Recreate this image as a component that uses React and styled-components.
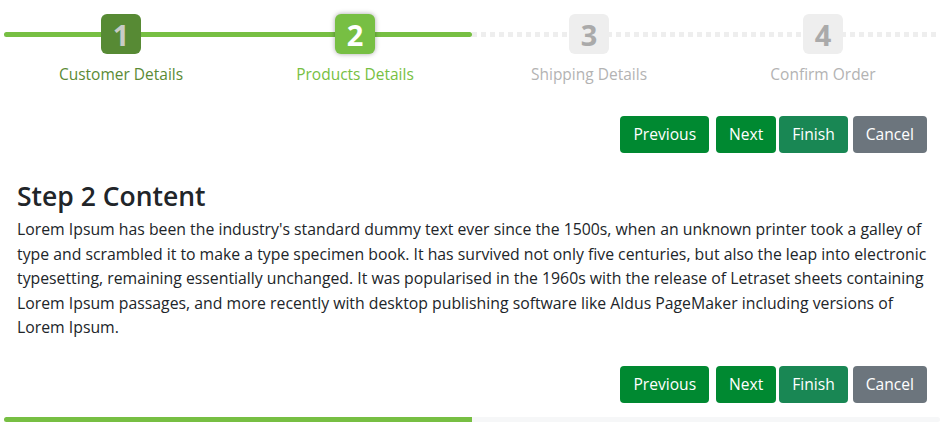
import React from "react";
import styled, { createGlobalStyle, css } from "styled-components";

const GlobalStyle = createGlobalStyle`
  html, body { margin: 0; padding: 0; background: #fff; }
  body {
    font-family: "Open Sans", "Noto Sans", sans-serif;
    color: #212529;
    -webkit-font-smoothing: antialiased;
  }
`;

const GREEN = "#77bf43";
const DARK_GREEN = "#578a34";

const Wizard = styled.div`
  margin-left: 4px;
  width: 936px;
`;

const Nav = styled.ol`
  position: relative;
  list-style: none;
  margin: 0;
  padding: 14px 0 0;
  display: grid;
  grid-template-columns: repeat(4, 1fr);

  &::before {
    content: "";
    position: absolute;
    left: 0;
    right: 0;
    top: 32px;
    height: 5px;
    border-radius: 3px;
    background: repeating-linear-gradient(
      to right,
      #eeeeee 0,
      #eeeeee 5px,
      transparent 5px,
      transparent 9px
    );
  }

  &::after {
    content: "";
    position: absolute;
    left: 0;
    top: 32px;
    height: 5px;
    width: ${(p) => p.$progress}%;
    border-radius: 3px;
    background: ${GREEN};
  }
`;

const Step = styled.li`
  position: relative;
  z-index: 1;
  display: flex;
  flex-direction: column;
  align-items: center;
`;

const stateStyles = {
  done: css`
    background: ${DARK_GREEN};
    color: #c8ccc6;
  `,
  active: css`
    background: ${GREEN};
    color: #ffffff;
    box-shadow: 0 0 5px rgba(0, 0, 0, 0.35);
  `,
  todo: css`
    background: #eeeeee;
    color: #aaaaaa;
  `,
};

const labelColors = {
  done: "#5a8a35",
  active: GREEN,
  todo: "#b3b3b3",
};

const Num = styled.span`
  width: 40px;
  height: 40px;
  border-radius: 6px;
  display: flex;
  align-items: center;
  justify-content: center;
  font-size: 29px;
  font-weight: 700;
  line-height: 1;
  ${(p) => stateStyles[p.$state]}
`;

const Label = styled.span`
  margin-top: 9px;
  font-size: 15.5px;
  line-height: 22px;
  color: ${(p) => labelColors[p.$state]};
`;

const Toolbar = styled.div`
  display: flex;
  justify-content: flex-end;
  padding: 0 13px;
  margin-top: ${(p) => p.$top}px;
`;

const variants = {
  primary: "#008931",
  success: "#198754",
  secondary: "#6c757d",
};

const Button = styled.button`
  height: 37px;
  padding: 0 ${(p) => p.$pad}px;
  margin-left: ${(p) => p.$gap || 0}px;
  border: none;
  border-radius: 4px;
  background: ${(p) => variants[p.$variant]};
  color: #fff;
  font-family: "Open Sans", "Noto Sans", sans-serif;
  font-size: 15.6px;
  line-height: 37px;
  cursor: pointer;
`;

const Content = styled.div`
  padding: 0 13px;
  margin-top: 26px;
`;

const Heading = styled.h3`
  margin: 0;
  font-size: 26.5px;
  font-weight: 600;
  line-height: 34px;
  color: #212529;
`;

const Paragraph = styled.p`
  margin: 4px 0 0;
  font-size: 15.8px;
  line-height: 24.5px;
  white-space: nowrap;
`;

const Progress = styled.div`
  margin-top: 14px;
  height: 5px;
  border-radius: 3px;
  background: #f6f7f8;
  overflow: hidden;
`;

const ProgressFill = styled.div`
  height: 100%;
  background: ${GREEN};
`;

const steps = [
  { n: 1, label: "Customer Details", state: "done" },
  { n: 2, label: "Products Details", state: "active" },
  { n: 3, label: "Shipping Details", state: "todo" },
  { n: 4, label: "Confirm Order", state: "todo" },
];

const lines = [
  "Lorem Ipsum has been the industry's standard dummy text ever since the 1500s, when an unknown printer took a galley of",
  "type and scrambled it to make a type specimen book. It has survived not only five centuries, but also the leap into electronic",
  "typesetting, remaining essentially unchanged. It was popularised in the 1960s with the release of Letraset sheets containing",
  "Lorem Ipsum passages, and more recently with desktop publishing software like Aldus PageMaker including versions of",
  "Lorem Ipsum.",
];

function Buttons({ top }) {
  return (
    <Toolbar $top={top}>
      <Button $variant="primary" $pad={13}>Previous</Button>
      <Button $variant="primary" $pad={13} $gap={7}>Next</Button>
      <Button $variant="success" $pad={13} $gap={3}>Finish</Button>
      <Button $variant="secondary" $pad={13} $gap={5}>Cancel</Button>
    </Toolbar>
  );
}

export default function App() {
  const progress = 50;
  return (
    <Wizard>
      <GlobalStyle />
      <Nav $progress={progress}>
        {steps.map((s) => (
          <Step key={s.n}>
            <Num $state={s.state}>{s.n}</Num>
            <Label $state={s.state}>{s.label}</Label>
          </Step>
        ))}
      </Nav>
      <Buttons top={31} />
      <Content>
        <Heading>Step 2 Content</Heading>
        <Paragraph>
          {lines.map((l, i) => (
            <React.Fragment key={i}>
              {l}
              {i < lines.length - 1 && <br />}
            </React.Fragment>
          ))}
        </Paragraph>
      </Content>
      <Buttons top={26} />
      <Progress>
        <ProgressFill style={{ width: `${progress}%` }} />
      </Progress>
    </Wizard>
  );
}
